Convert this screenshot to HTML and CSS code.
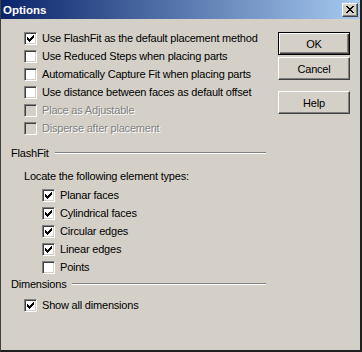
FILE: index.html
```html
<!DOCTYPE html>
<html>
<head>
  <title>Options</title>
  <link rel="stylesheet" href="styles.css">
</head>
<body>
<div class="window">
  <div class="titlebar">
    <span class="title">Options</span>
    <span class="close">
      <svg width="8" height="7" viewBox="0 0 8 7" shape-rendering="crispEdges"><path d="M0 0h2v1h-2z M1 1h2v1h-2z M2 2h4v1h-4z M3 3h2v1h-2z M2 4h4v1h-4z M1 5h2v1h-2z M0 6h2v1h-2z M6 0h2v1h-2z M5 1h2v1h-2z M5 5h2v1h-2z M6 6h2v1h-2z" fill="#000"/></svg>
    </span>
  </div>
  <div class="content">
    <div class="options">
      <div class="row"><span class="box checked"></span><span class="label">Use FlashFit as the default placement method</span></div>
      <div class="row"><span class="box"></span><span class="label">Use Reduced Steps when placing parts</span></div>
      <div class="row"><span class="box"></span><span class="label">Automatically Capture Fit when placing parts</span></div>
      <div class="row"><span class="box"></span><span class="label">Use distance between faces as default offset</span></div>
      <div class="row disabled"><span class="box"></span><span class="label">Place as Adjustable</span></div>
      <div class="row disabled"><span class="box"></span><span class="label">Disperse after placement</span></div>

      <div class="group-head first"><span>FlashFit</span><span class="rule"></span></div>
      <div class="note">Locate the following element types:</div>
      <div class="row sub first-sub"><span class="box checked"></span><span class="label">Planar faces</span></div>
      <div class="row sub"><span class="box checked"></span><span class="label">Cylindrical faces</span></div>
      <div class="row sub"><span class="box checked"></span><span class="label">Circular edges</span></div>
      <div class="row sub"><span class="box checked"></span><span class="label">Linear edges</span></div>
      <div class="row sub"><span class="box"></span><span class="label">Points</span></div>

      <div class="group-head second"><span>Dimensions</span><span class="rule"></span></div>
      <div class="row last"><span class="box checked"></span><span class="label">Show all dimensions</span></div>
    </div>
    <div class="buttons">
      <div class="btn default"><span>OK</span></div>
      <div class="btn">Cancel</div>
      <div class="btn help">Help</div>
    </div>
  </div>
</div>
</body>
</html>
```

FILE: styles.css
```css
body{
margin: 0;
background-color: #d4d0c8;
font-family: "Liberation Sans", Arial, sans-serif;
font-size: 11px;
letter-spacing: -0.2px;
color: black;
}
.window{
width: 362px;
height: 352px;
box-sizing: border-box;
border-left: 1px solid #404040;
border-right: 2px solid #202020;
border-bottom: 2px solid #202020;
display: flex;
flex-direction: column;
}
.titlebar{
height: 19px;
background: linear-gradient(to right, #0a246a, #a6caf0);
display: flex;
align-items: center;
justify-content: space-between;
padding: 0 2px 0 2px;
}
.title{
color: white;
font-weight: bold;
font-size: 11.5px;
letter-spacing: 0;
}
.close{
width: 16px;
height: 14px;
box-sizing: border-box;
background-color: #d4d0c8;
border-top: 1px solid white;
border-left: 1px solid white;
border-right: 1px solid #404040;
border-bottom: 1px solid #404040;
box-shadow: inset -1px -1px #808080;
display: flex;
align-items: center;
justify-content: center;
}
.content{
display: flex;
padding-top: 10px;
}
.options{
width: 259px;
padding-left: 10px;
}
.row{
height: 18px;
display: flex;
align-items: center;
margin-left: 13px;
}
.row.sub{
margin-left: 31px;
}
.row.first-sub{
margin-top: 3px;
}
.row.last{
margin-top: 5px;
}
.box{
width: 13px;
height: 13px;
box-sizing: border-box;
background-color: white;
border-top: 1px solid #808080;
border-left: 1px solid #808080;
border-right: 1px solid white;
border-bottom: 1px solid white;
box-shadow: inset 1px 1px #404040, inset -1px -1px #d4d0c8;
margin-right: 5px;
flex: none;
}
.box.checked{
background-image: url("data:image/svg+xml,%3Csvg xmlns='http://www.w3.org/2000/svg' width='11' height='11' shape-rendering='crispEdges'%3E%3Cpath d='M2 4h1v3h-1z M3 5h1v3h-1z M4 6h1v3h-1z M5 5h1v3h-1z M6 4h1v3h-1z M7 3h1v3h-1z M8 2h1v3h-1z' fill='%23000'/%3E%3C/svg%3E");
background-repeat: no-repeat;
}
.disabled .box{
background-color: #d4d0c8;
}
.disabled .label{
color: #808080;
text-shadow: 1px 1px white;
}
.group-head{
height: 14px;
display: flex;
align-items: center;
}
.group-head.first{
margin-top: 9px;
}
.group-head.second{
margin-top: 1px;
}
.rule{
flex: 1;
height: 0;
border-top: 1px solid #808080;
border-bottom: 1px solid white;
margin-left: 6px;
margin-right: 4px;
}
.note{
margin: 10px 0 0 13px;
height: 13px;
line-height: 13px;
}
.buttons{
margin-left: 8px;
padding-top: 3px;
display: flex;
flex-direction: column;
}
.btn{
width: 72px;
height: 23px;
box-sizing: border-box;
border-top: 1px solid white;
border-left: 1px solid white;
border-right: 1px solid #404040;
border-bottom: 1px solid #404040;
box-shadow: inset -1px -1px #808080;
display: flex;
align-items: center;
justify-content: center;
margin-bottom: 2px;
}
.btn.default{
border: 1px solid black;
box-shadow: inset 1px 1px white, inset -1px -1px #404040, inset -2px -2px #808080;
}
.btn.help{
margin-top: 9px;
}
```
